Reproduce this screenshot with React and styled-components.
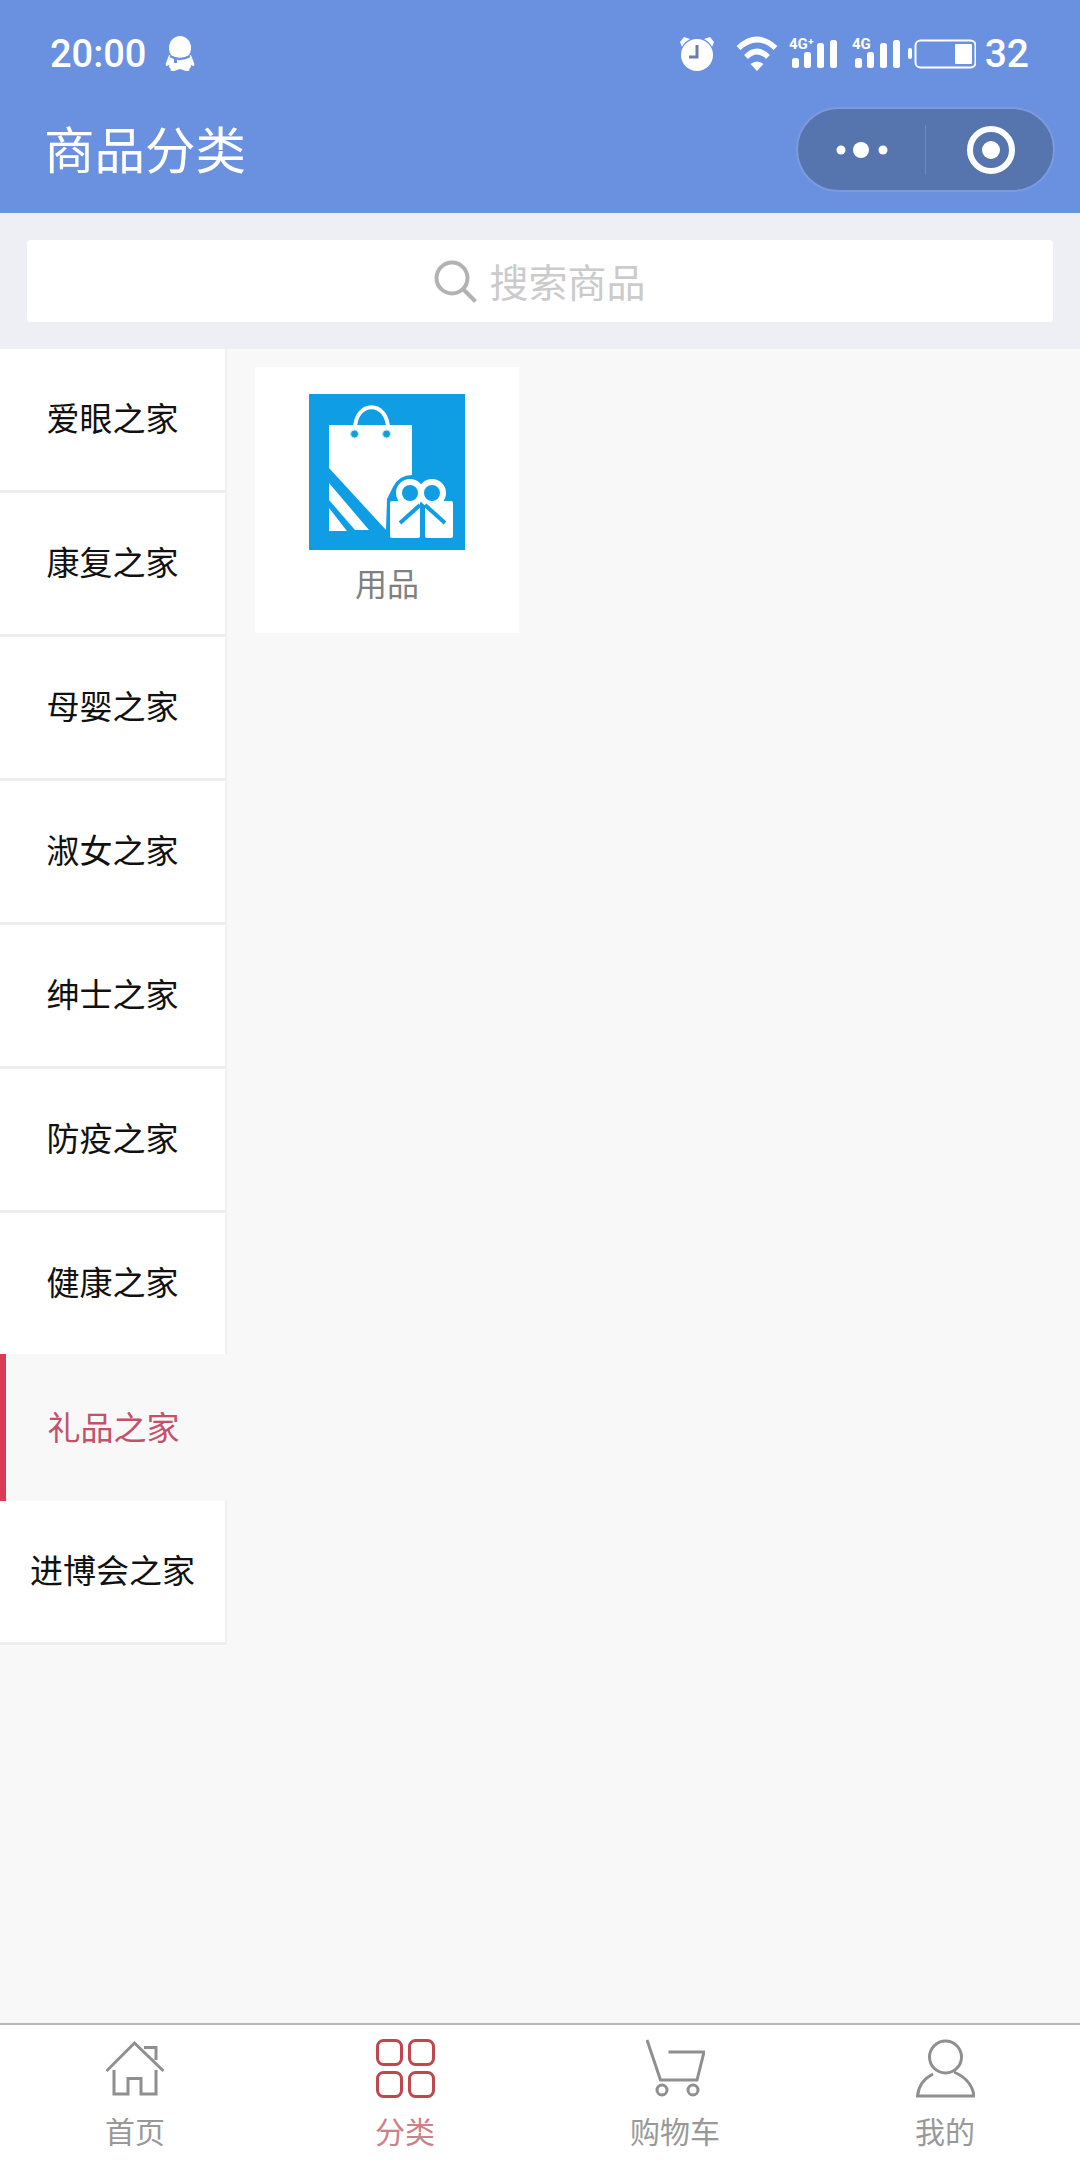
import React from 'react';
import styled, { createGlobalStyle } from 'styled-components';

const GlobalStyle = createGlobalStyle`
	html, body {
		margin: 0;
		padding: 0;
		background-color: #f8f8f9;
		font-family: "Noto Sans CJK SC", "Noto Sans", sans-serif;
	}

	* {
		box-sizing: border-box;
	}
`;

const Page = styled.div`
	width: 1080px;
	height: 2160px;
	display: flex;
	flex-direction: column;
	overflow: hidden;
`;

const Header = styled.header`
	height: 213px;
	background-color: #6a91e0;
	color: #fff;
	flex-shrink: 0;
`;

const StatusBar = styled.div`
	height: 107px;
	padding: 0 51px 0 50px;
	display: flex;
	align-items: center;
	justify-content: space-between;
`;

const StatusLeft = styled.div`
	display: flex;
	align-items: center;
	gap: 19px;
`;

const StatusRight = styled.div`
	display: flex;
	align-items: center;
`;

const Time = styled.span`
	font-family: Roboto, sans-serif;
	font-size: 38px;
	font-weight: 500;
	line-height: 44px;
`;

const Battery = styled.span`
	font-family: Roboto, sans-serif;
	font-size: 39px;
	font-weight: 500;
	line-height: 44px;
	margin-left: 9px;
`;

const StatusIcon = styled.svg`
	display: block;
	margin-left: ${(p) => p.$gap || 0}px;
	fill: #fff;
`;

const NavBar = styled.div`
	height: 85px;
	padding: 0 25px 0 44px;
	display: flex;
	align-items: center;
	justify-content: space-between;
`;

const Title = styled.h1`
	margin: 0;
	padding-bottom: 5px;
	font-size: 50.5px;
	font-weight: 400;
	line-height: 70px;
`;

const Capsule = styled.div`
	width: 259px;
	height: 85px;
	border-radius: 43px;
	background-color: #5674ae;
	border: 2px solid #7d9ade;
	display: flex;
	align-items: center;
`;

const CapsulePart = styled.div`
	width: ${(p) => p.$width}px;
	display: flex;
	align-items: center;
	justify-content: center;
	padding-left: ${(p) => p.$shift || 0}px;
`;

const CapsuleDivider = styled.div`
	width: 1px;
	height: 50px;
	background-color: #7088c0;
`;

const SearchArea = styled.div`
	height: 136px;
	padding: 27px;
	background-color: #eeeff4;
	flex-shrink: 0;
`;

const SearchBox = styled.div`
	height: 82px;
	background-color: #fff;
	border-radius: 4px;
	display: flex;
	align-items: center;
	justify-content: center;
	gap: 12px;
`;

const SearchText = styled.span`
	padding-bottom: 2px;
	font-size: 39px;
	line-height: 50px;
	color: #cbcbcb;
`;

const Body = styled.div`
	flex: 1;
	display: flex;
	align-items: flex-start;
	background-color: #f8f8f9;
	min-height: 0;
`;

const Sidebar = styled.nav`
	width: 227px;
	flex-shrink: 0;
`;

const SideItem = styled.div`
	height: ${(p) => (p.$active ? 147 : 144)}px;
	margin-top: ${(p) => (p.$active ? -3 : 0)}px;
	display: flex;
	align-items: center;
	justify-content: center;
	padding-bottom: ${(p) => (p.$active ? 4 : 5)}px;
	padding-right: ${(p) => (p.$active ? 6 : 0)}px;
	font-size: 33px;
	color: ${(p) => (p.$active ? '#c4506a' : '#111')};
	background-color: ${(p) => (p.$active ? '#f8f8f9' : '#fff')};
	border-right: ${(p) => (p.$active ? 'none' : '2px solid #f0f0f1')};
	border-bottom: ${(p) => (p.$active ? 'none' : '3px solid #eeeeef')};
	border-left: ${(p) => (p.$active ? '6px solid #d93a55' : 'none')};
`;

const Content = styled.main`
	flex: 1;
	padding: 18px 0 0 28px;
`;

const Card = styled.div`
	width: 264px;
	height: 266px;
	background-color: #fff;
	padding-top: 27px;
	display: flex;
	flex-direction: column;
	align-items: center;
`;

const CardLabel = styled.div`
	margin-top: 10px;
	font-size: 32px;
	line-height: 44px;
	color: #808080;
`;

const TabBar = styled.footer`
	height: 137px;
	flex-shrink: 0;
	border-top: 2px solid #b9b9b9;
	background-color: #fff;
	padding-top: 14px;
	display: grid;
	grid-template-columns: repeat(4, 1fr);
`;

const Tab = styled.div`
	display: flex;
	flex-direction: column;
	align-items: center;
	color: ${(p) => (p.$active ? '#c0474f' : '#8f8f8f')};
`;

const TabIcon = styled.svg`
	display: block;
	fill: none;
	stroke: currentColor;
	stroke-width: 3;
`;

const TabLabel = styled.span`
	margin-top: 16px;
	font-size: 30px;
	line-height: 32px;
	color: ${(p) => (p.$active ? '#cb8189' : '#999')};
`;

const categories = ['爱眼之家', '康复之家', '母婴之家', '淑女之家', '绅士之家', '防疫之家', '健康之家', '礼品之家', '进博会之家'];

function QQIcon() {
	return (
		<StatusIcon width="30" height="36" viewBox="0 0 30 36">
			<ellipse cx="15" cy="12" rx="11" ry="12" />
			<path d="M4 19 Q15 24 26 19 L29 27 Q30 30 28 30 L26 29 Q26 32 24 33 Q26 35 21 35 L15 33 L9 35 Q4 35 6 33 Q4 32 4 29 L2 30 Q0 30 1 27 Z" />
			<path d="M5 20 Q15 26 25 20" fill="none" stroke="#6a91e0" strokeWidth="2.500" />
			<rect x="9" y="22" width="3" height="5" fill="#6a91e0" />
		</StatusIcon>
	);
}

function AlarmIcon() {
	return (
		<StatusIcon width="36" height="40" viewBox="0 0 36 40">
			<circle cx="18" cy="21" r="16" />
			<path d="M1 8 L5 3 L11 5 Q5 8 3 13 Z" />
			<path d="M35 8 L31 3 L25 5 Q31 8 33 13 Z" />
			<path d="M18 11 V23 H10" fill="none" stroke="#6a7fa8" strokeWidth="3" />
		</StatusIcon>
	);
}

function WifiIcon() {
	return (
		<StatusIcon width="42" height="40" viewBox="0 0 42 40" $gap={21}>
			<path d="M2.500 14 Q21 -3 39.500 14" fill="none" stroke="#fff" strokeWidth="5.500" />
			<path d="M10 23 Q21 12 32 23" fill="none" stroke="#fff" strokeWidth="5.500" />
			<path d="M14.500 30 Q21 25 27.500 30 L21 37 Z" />
		</StatusIcon>
	);
}

function SignalIcon({ label, gap }) {
	return (
		<StatusIcon width="48" height="40" viewBox="0 0 48 40" $gap={gap}>
			<text x="0" y="15" fontSize="15" fontWeight="700" fontFamily="Roboto, sans-serif" fill="#fff">{label}</text>
			<rect x="3" y="24" width="7" height="10" rx="2.500" />
			<rect x="15" y="18" width="7" height="16" rx="2.500" />
			<rect x="28" y="9" width="7" height="25" rx="2.500" />
			<rect x="41" y="6" width="7" height="28" rx="2.500" />
		</StatusIcon>
	);
}

function BatteryIcon() {
	return (
		<StatusIcon width="68" height="40" viewBox="0 0 68 40" $gap={8}>
			<rect x="0" y="14" width="4" height="11" rx="2" />
			<rect x="7.500" y="6.500" width="60" height="27" rx="5" fill="none" stroke="#fff" strokeWidth="2" />
			<rect x="47" y="10" width="17" height="20" rx="1" />
		</StatusIcon>
	);
}

function MoreIcon() {
	return (
		<svg width="52" height="20" viewBox="0 0 52 20" fill="#fff">
			<circle cx="5" cy="10" r="4.500" />
			<circle cx="25" cy="10" r="8" />
			<circle cx="47" cy="10" r="4.500" />
		</svg>
	);
}

function TargetIcon() {
	return (
		<svg width="48" height="48" viewBox="0 0 48 48">
			<circle cx="24" cy="24" r="21" fill="none" stroke="#fff" strokeWidth="6" />
			<circle cx="24" cy="24" r="9" fill="#fff" />
		</svg>
	);
}

function SearchIcon() {
	return (
		<svg width="43" height="43" viewBox="0 0 43 43" fill="none" stroke="#b2b2b2" strokeWidth="4">
			<circle cx="18" cy="18" r="15.500" />
			<path d="M29 29 L41.500 41.500" />
		</svg>
	);
}

function GiftBagImage() {
	return (
		<svg width="156" height="156" viewBox="0 0 156 156">
			<rect width="156" height="156" fill="#0f9de3" />
			<path d="M20 31 H103 V81 Q90 81 84 93 L78 105 L77 136 L20 74 Z" fill="#fff" />
			<path d="M46 35 C46 6 79 6 79 35" fill="none" stroke="#fff" strokeWidth="4" />
			<circle cx="45.500" cy="40" r="4" fill="#0f9de3" stroke="#cfeafa" strokeWidth="1" />
			<circle cx="77.500" cy="40" r="4" fill="#0f9de3" stroke="#cfeafa" strokeWidth="1" />
			<path d="M20 89 L60 136 H46 L20 106 Z" fill="#fff" />
			<path d="M20 114 L38 137 H20 Z" fill="#fff" />
			<rect x="81" y="107" width="30" height="37" rx="2" fill="#fff" />
			<rect x="116" y="107" width="28" height="37" rx="2" fill="#fff" />
			<circle cx="101" cy="99" r="11" fill="#0f9de3" stroke="#fff" strokeWidth="6" />
			<circle cx="123" cy="99" r="11" fill="#0f9de3" stroke="#fff" strokeWidth="6" />
			<path d="M111 111 L91 129" stroke="#0f9de3" strokeWidth="4" fill="none" />
			<path d="M116 111 L136 129" stroke="#0f9de3" strokeWidth="4" fill="none" />
		</svg>
	);
}

const tabs = [
	{
		label: '首页',
		icon: (
			<>
				<path d="M0.500 32 L28.500 4 L57.500 32" />
				<path d="M38 8.500 H50 V21" />
				<path d="M8 31 V55 H22 V39.500 H35 V55 H50 V31" />
			</>
		),
	},
	{
		label: '分类',
		active: true,
		icon: (
			<>
				<rect x="1.500" y="1.500" width="24" height="24" rx="6" />
				<rect x="33.500" y="1.500" width="24" height="24" rx="6" />
				<rect x="1.500" y="33.500" width="24" height="24" rx="6" />
				<rect x="33.500" y="33.500" width="24" height="24" rx="6" />
			</>
		),
	},
	{
		label: '购物车',
		icon: (
			<>
				<path d="M1 1 L14.500 41 H51 L58 13 H22.500" />
				<circle cx="16" cy="51" r="5" />
				<circle cx="47" cy="51" r="5" />
			</>
		),
	},
	{
		label: '我的',
		icon: (
			<>
				<circle cx="29.500" cy="18" r="16" />
				<path d="M17 35 Q3 42 1.500 57 H58 Q56 41 38 33" />
			</>
		),
	},
];

export default function App() {
	return (
		<Page>
			<GlobalStyle />
			<Header>
				<StatusBar>
					<StatusLeft>
						<Time>20:00</Time>
						<QQIcon />
					</StatusLeft>
					<StatusRight>
						<AlarmIcon />
						<WifiIcon />
						<SignalIcon label="4G⁺" gap={11} />
						<SignalIcon label="4G" gap={15} />
						<BatteryIcon />
						<Battery>32</Battery>
					</StatusRight>
				</StatusBar>
				<NavBar>
					<Title>商品分类</Title>
					<Capsule>
						<CapsulePart $width={127}><MoreIcon /></CapsulePart>
						<CapsuleDivider />
						<CapsulePart $width={127} $shift={3}><TargetIcon /></CapsulePart>
					</Capsule>
				</NavBar>
			</Header>
			<SearchArea>
				<SearchBox>
					<SearchIcon />
					<SearchText>搜索商品</SearchText>
				</SearchBox>
			</SearchArea>
			<Body>
				<Sidebar>
					{categories.map((name) => (
						<SideItem key={name} $active={name === '礼品之家'}>{name}</SideItem>
					))}
				</Sidebar>
				<Content>
					<Card>
						<GiftBagImage />
						<CardLabel>用品</CardLabel>
					</Card>
				</Content>
			</Body>
			<TabBar>
				{tabs.map((tab) => (
					<Tab key={tab.label} $active={tab.active}>
						<TabIcon width="59" height="59" viewBox="0 0 59 59">{tab.icon}</TabIcon>
						<TabLabel $active={tab.active}>{tab.label}</TabLabel>
					</Tab>
				))}
			</TabBar>
		</Page>
	);
}
